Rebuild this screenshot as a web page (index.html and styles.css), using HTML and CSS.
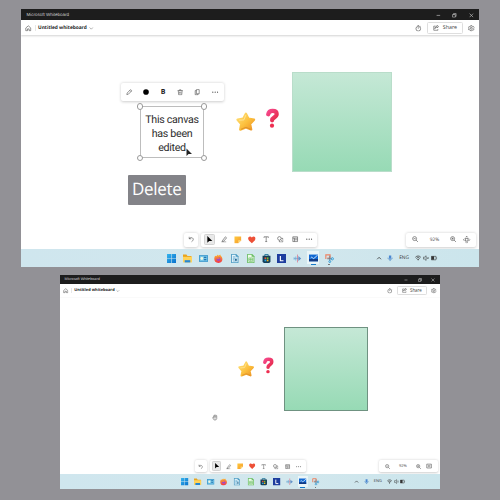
FILE: index.html
```html
<!DOCTYPE html>
<html lang="en">
<head>
<meta charset="utf-8">
<title>Whiteboard</title>
<link rel="stylesheet" href="styles.css">
</head>
<body>
<svg class="defs" width="0" height="0" aria-hidden="true">
  <defs>
    <linearGradient id="gold" x1="0" y1="0" x2="1" y2="1"><stop offset="0" stop-color="#ffe27a"/><stop offset=".55" stop-color="#fcbf3c"/><stop offset="1" stop-color="#ec9325"/></linearGradient>
    <linearGradient id="pink" x1="0" y1="0" x2="1" y2="1"><stop offset="0" stop-color="#f5488a"/><stop offset="1" stop-color="#e52a48"/></linearGradient>
    <linearGradient id="note" x1="0" y1="0" x2="1" y2="1"><stop offset="0" stop-color="#ffc93c"/><stop offset="1" stop-color="#f59a2e"/></linearGradient>
    <linearGradient id="win" x1="0" y1="0" x2="1" y2="1"><stop offset="0" stop-color="#35b4ee"/><stop offset="1" stop-color="#0870cc"/></linearGradient>
    <linearGradient id="fox" x1="0" y1="0" x2="0" y2="1"><stop offset="0" stop-color="#ffb52b"/><stop offset="1" stop-color="#f0344c"/></linearGradient>
  </defs>
  <symbol id="home" viewBox="0 0 16 16"><path d="M2 7.200 8 2l6 5.200V14H10V9.500H6V14H2Z" class="ln"/></symbol>
  <symbol id="down" viewBox="0 0 16 16"><path d="m2 5 6 6 6-6" class="ln"/></symbol>
  <symbol id="up" viewBox="0 0 16 16"><path d="m3 11 5-5 5 5" class="ln thick"/></symbol>
  <symbol id="min" viewBox="0 0 16 16"><path d="M2 8h12" class="ln thick"/></symbol>
  <symbol id="max" viewBox="0 0 16 16"><path d="M2 5h9v9H2ZM5 5V2h9v9h-3" class="ln thick"/></symbol>
  <symbol id="close" viewBox="0 0 16 16"><path d="m2 2 12 12M14 2 2 14" class="ln thick"/></symbol>
  <symbol id="timer" viewBox="0 0 16 16"><circle cx="8" cy="9" r="5.700" class="ln"/><path d="M8 5.500V9M6 1h4M13 3l1.200 1.200" class="ln"/></symbol>
  <symbol id="share" viewBox="0 0 16 16"><path d="M7 3H2v11h11v-3M5 10c.5-3 2.500-4.500 6-4.500V8l4-4-4-3v2.300C7.500 3.500 5.200 6 5 10Z" class="ln"/></symbol>
  <symbol id="gear" viewBox="0 0 16 16"><path d="m6.500 1.500 3 0 .6 2 1.600.8 2-.5 1.500 2.600L13.800 8l1.400 1.600-1.500 2.600-2-.5-1.600.8-.6 2h-3l-.6-2-1.600-.8-2 .5L.8 9.600 2.200 8 .8 6.400l1.500-2.600 2 .5 1.600-.8Z" class="ln"/><circle cx="8" cy="8" r="2.300" class="ln"/></symbol>
  <symbol id="pencil" viewBox="0 0 16 16"><path d="m2 14 1-4 8.500-8.500 3 3L6 13ZM9.500 3.500l3 3" class="ln"/></symbol>
  <symbol id="dot" viewBox="0 0 16 16"><circle cx="8" cy="8" r="7.500"/></symbol>
  <symbol id="trash" viewBox="0 0 16 16"><path d="M1.500 4h13M6 4V2h4v2M3.200 4l1 10.500h7.600l1-10.500M6.500 7v4.500M9.500 7v4.500" class="ln"/></symbol>
  <symbol id="copy" viewBox="0 0 16 16"><path d="M6 1.500h7v10.500H6ZM6 4H3v10.500h7V12" class="ln"/></symbol>
  <symbol id="more" viewBox="0 0 16 16"><circle cx="2" cy="8" r="1.500"/><circle cx="8" cy="8" r="1.500"/><circle cx="14" cy="8" r="1.500"/></symbol>
  <symbol id="undo" viewBox="0 0 16 16"><path d="M3 2v5h5M3 7c3-3.500 6-3.500 8.300-2 2.500 1.800 2.500 5 .5 6.800L8.500 15" class="ln"/></symbol>
  <symbol id="pointer" viewBox="0 0 16 16"><path d="M3 0v15l4-4h7Z"/></symbol>
  <symbol id="pen" viewBox="0 0 16 16"><path d="m4 11 7-9 3 2.500-7 8.500-4 .5ZM1 15h12" class="ln"/></symbol>
  <symbol id="sticky" viewBox="0 0 16 16"><path d="M1 1h14v8l-6 6H1Z" fill="url(#note)"/><path d="M15 9H9v6Z" fill="#ffdc82"/></symbol>
  <symbol id="heart" viewBox="0 0 16 16"><path d="M8 15C3 11 .3 8.500.3 5.300.3 1 5.500-.3 8 3.200 10.500-.3 15.700 1 15.700 5.300 15.700 8.500 13 11 8 15Z" fill="#ed5037"/></symbol>
  <symbol id="text" viewBox="0 0 16 16"><path d="M2.500 4.500V2h11v2.500M8 2v12M5.500 14h5" class="ln"/></symbol>
  <symbol id="shapes" viewBox="0 0 16 16"><circle cx="6" cy="6" r="4.500" class="ln"/><path d="M11 6h4v9H6v-4" class="ln"/><path d="m9 9 3 3" class="ln"/></symbol>
  <symbol id="layout" viewBox="0 0 16 16"><path d="M2 2h12v12H2ZM2 5.500h12M6 5.500V14M6 9.500h8" class="ln"/></symbol>
  <symbol id="zoomout" viewBox="0 0 16 16"><circle cx="6.500" cy="6.500" r="5" class="ln"/><path d="m10 10 5 5M4 6.500h5" class="ln"/></symbol>
  <symbol id="zoomin" viewBox="0 0 16 16"><circle cx="6.500" cy="6.500" r="5" class="ln"/><path d="m10 10 5 5M4 6.500h5M6.500 4v5" class="ln"/></symbol>
  <symbol id="move" viewBox="0 0 16 16"><path d="M5 5h6v6H5ZM6 2.500l2-2 2 2M6 13.500l2 2 2-2M2.500 6l-2 2 2 2M13.500 6l2 2-2 2" class="ln"/></symbol>
  <symbol id="fit" viewBox="0 0 16 16"><path d="M2 3h12v10H2ZM5 8h6M6.500 6.500 5 8l1.500 1.500M9.500 6.500 11 8l-1.500 1.500" class="ln"/></symbol>
  <symbol id="start" viewBox="0 0 16 16"><path d="M0 0h7.500v7.500H0ZM8.500 0H16v7.500H8.500ZM0 8.500h7.500V16H0ZM8.500 8.500H16V16H8.500Z" fill="url(#win)"/></symbol>
  <symbol id="folder" viewBox="0 0 16 16"><path d="M0 1h6l2 2.500h7V8H0Z" fill="#e9a41d"/><path d="M0 5h16v10H0Z" fill="#ffd35a"/><path d="M3 11h10v4H3Z" fill="#2587d3"/></symbol>
  <symbol id="panel" viewBox="0 0 16 16"><path d="M0 2h16v12H0Z" fill="#3e9bce"/><path d="M1.500 3.500h13v9h-13Z" fill="#74c4e8"/><circle cx="5" cy="8" r="2.500" fill="#f1f8e0"/><path d="M9 5h4v2H9ZM9 9h4v2H9Z" fill="#2474ac"/></symbol>
  <symbol id="firefox" viewBox="0 0 16 16"><path d="M2 3 4 4 7 1l1 2 3-2 1 2c4 3 5 12-4 13C0 16-1 8 2 3Z" fill="url(#fox)"/><circle cx="8" cy="9" r="3.600" fill="#a646c6"/><path d="M4 6c4-1 5 1 7 1-2 1-3 2-6 1Z" fill="#ff8a28"/></symbol>
  <symbol id="writer" viewBox="0 0 16 16"><path d="M2 0h9l4 4v12H2Z" fill="#4a9ac2"/><path d="M3.500 1.500H10V5h3.500v9.500h-10Z" fill="#e8f5fb"/><path d="M5 5h4M5 7.500h7M5 10h3M5 12.500h7" stroke="#278abc"/><path d="M9 9h3v3H9Z" fill="#1d5d86"/></symbol>
  <symbol id="calc" viewBox="0 0 16 16"><path d="M2 0h9l4 4v12H2Z" fill="#68bd62"/><path d="M3.500 1.500H10V5h3.500v9.500h-10Z" fill="#eefbea"/><path d="M5 7h7v6H5ZM5 10h7M8.500 7v6" fill="none" stroke="#52b34d"/></symbol>
  <symbol id="store" viewBox="0 0 16 16"><path d="M5 4V1h6v3" fill="none" stroke="#126b92" stroke-width="1.500"/><path d="M1 3h14v10q0 3-3 3H4q-3 0-3-3Z" fill="#123e59"/><path d="M4.500 6h3v3h-3Z" fill="#ef553b"/><path d="M8.500 6h3v3h-3Z" fill="#7bbd30"/><path d="M4.500 10h3v3h-3Z" fill="#28a9ec"/><path d="M8.500 10h3v3h-3Z" fill="#f9b91b"/></symbol>
  <symbol id="lapp" viewBox="0 0 16 16"><path d="M0 0h16v16H0Z" fill="#1d3d9e"/><path d="M6 3.500v8.500h5.500" fill="none" stroke="#fff" stroke-width="2"/></symbol>
  <symbol id="wave" viewBox="0 0 16 16"><path d="M2 6v4M5 4.500v7" stroke="#64aada" stroke-width="1.500"/><path d="M8 1v14" stroke="#dc7187" stroke-width="1.300"/><path d="m9.500 3.500 5 4.500-5 4.500Z" fill="#5a90c8"/><path d="M2 8h12" stroke="#7398c6"/></symbol>
  <symbol id="board" viewBox="0 0 16 16"><path d="M0 1h16v12H0Z" fill="#1269d3"/><path d="M0 9h16v4H0Z" fill="#123a83"/><path d="M3 7c3-4 4 4 7 0l5-5" fill="none" stroke="#fff" stroke-width="1.500"/></symbol>
  <symbol id="snip" viewBox="0 0 16 16"><path d="M1.500 9V1.500H9V7H4" fill="none" stroke="#ef8260" stroke-width="2"/><path d="M8.500 3v9M4 8.500h8" stroke="#66798a" stroke-width="1.500"/><circle cx="13" cy="8.500" r="2" fill="none" stroke="#2595d4" stroke-width="1.500"/><circle cx="8.500" cy="13.500" r="1.700" fill="none" stroke="#2595d4" stroke-width="1.500"/></symbol>
  <symbol id="mic" viewBox="0 0 16 16"><path d="M5 1h6v9H5Z" fill="#4a87d2"/><path d="M2.500 7c0 7 11 7 11 0M8 12v4" fill="none" stroke="#3478c2" stroke-width="1.500"/></symbol>
  <symbol id="wifi" viewBox="0 0 16 16"><path d="M1 6c4-4.500 10-4.500 14 0M3.500 9c3-3 6-3 9 0" class="ln thick"/><path d="m5.500 11.500 2.500 3 2.500-3q-2.500-2-5 0Z"/></symbol>
  <symbol id="sound" viewBox="0 0 16 16"><path d="M1 5.500h3L8 2v12L4 10.500H1ZM10.500 6l4 4M14.500 6l-4 4" class="ln"/></symbol>
  <symbol id="battery" viewBox="0 0 16 16"><path d="M1 3.500h12v9H1ZM15 6v4" class="ln"/><path d="M1 3.500h7v9H1Z"/></symbol>
  <symbol id="star" viewBox="0 0 20 20"><path d="M10 1.700 12.500 6.800 18.200 7.700 14.200 12 15.300 17.600 10 15.500 4.300 17.700 5.300 12 1.600 7.700 7.300 6.800Z" fill="url(#gold)" stroke="url(#gold)" stroke-width="2.400" stroke-linejoin="round"/><path d="m10 3-2 5-5 .3" fill="none" stroke="#ffeaa0" stroke-width=".8"/><path d="m5 17.500 5-2 5 2" fill="none" stroke="#d98929" stroke-width=".8"/></symbol>
  <symbol id="question" viewBox="0 0 13 20"><path d="M2.200 6.300C2.600 4 4.300 2.800 6.600 2.800c2.500 0 4.100 1.200 4.100 3.300 0 3.600-4.600 2.900-4.600 6.200" fill="none" stroke="url(#pink)" stroke-width="4.200" stroke-linecap="round"/><circle cx="6" cy="17.700" r="2.100" fill="#ee2e50"/></symbol>
  <symbol id="hand" viewBox="0 0 16 16"><path d="M4 8V4q1-2 2 0V2q1-1.500 2.200 0 1.200-1.300 2.300.5 1.800-1 2.300 1.200V11q-1 4-5 4-3 0-4.500-3L1.500 8.500Q2 6.500 4 8Z" fill="#ddd" stroke="#444"/><path d="M6 4v4M8.200 3v5M10.500 3v5" stroke="#555"/></symbol>
</svg>

<main class="page">
  <section class="window" data-last="move">
    <div class="canvas">
      <div class="tools edit-tools">
        <svg><use href="#pencil"/></svg><svg class="ink"><use href="#dot"/></svg><b>B</b><svg><use href="#trash"/></svg><svg><use href="#copy"/></svg><svg><use href="#more"/></svg>
      </div>
      <div class="textbox">
        <p>This canvas<br>has been<br>edited</p>
        <i class="handle tl"></i><i class="handle tr"></i><i class="handle bl"></i><i class="handle br"></i>
      </div>
      <svg class="cursor"><use href="#pointer"/></svg>
      <div class="tip">Delete</div>
      <svg class="star"><use href="#star"/></svg>
      <svg class="question"><use href="#question"/></svg>
      <div class="square"></div>
    </div>
  </section>
  <section class="window small" data-last="fit">
    <div class="canvas">
      <svg class="star"><use href="#star"/></svg>
      <svg class="question"><use href="#question"/></svg>
      <div class="square"></div>
      <svg class="hand"><use href="#hand"/></svg>
    </div>
  </section>
</main>

<template id="top">
  <div class="titlebar"><span>Microsoft Whiteboard</span><div class="controls"><svg><use href="#min"/></svg><svg><use href="#max"/></svg><svg><use href="#close"/></svg></div></div>
  <header class="header">
    <svg class="home"><use href="#home"/></svg><span class="rule"></span><h1>Untitled whiteboard</h1><svg class="chev"><use href="#down"/></svg>
    <span class="grow"></span>
    <svg class="timer"><use href="#timer"/></svg><button class="share"><svg><use href="#share"/></svg><span>Share</span></button><svg class="gear"><use href="#gear"/></svg>
  </header>
</template>
<template id="bottom">
  <div class="dock">
    <div class="tools undo"><svg><use href="#undo"/></svg></div>
    <div class="tools main-tools">
      <span class="active"><svg class="ink"><use href="#pointer"/></svg></span><span><svg><use href="#pen"/></svg></span><span><svg class="big"><use href="#sticky"/></svg></span><span><svg class="big"><use href="#heart"/></svg></span><span><svg><use href="#text"/></svg></span><span><svg><use href="#shapes"/></svg></span><span><svg><use href="#layout"/></svg></span><span><svg><use href="#more"/></svg></span>
    </div>
    <div class="tools zoom"><svg><use href="#zoomout"/></svg><span>92%</span><svg><use href="#zoomin"/></svg><svg class="last"><use/></svg></div>
  </div>
  <footer class="taskbar">
    <div class="apps"><span><svg><use href="#start"/></svg></span><span><svg><use href="#folder"/></svg></span><span><svg><use href="#panel"/></svg></span><span><svg><use href="#firefox"/></svg></span><span><svg><use href="#writer"/></svg></span><span><svg><use href="#calc"/></svg></span><span><svg><use href="#store"/></svg></span><span><svg><use href="#lapp"/></svg></span><span><svg><use href="#wave"/></svg></span><span class="open"><svg><use href="#board"/></svg></span><span class="running"><svg><use href="#snip"/></svg></span></div>
    <div class="tray"><span><svg><use href="#up"/></svg></span><span><svg><use href="#mic"/></svg></span><span class="lang">ENG</span><span><svg><use href="#wifi"/></svg></span><span><svg><use href="#sound"/></svg></span><span><svg><use href="#battery"/></svg></span></div>
  </footer>
</template>
<script src="app.js"></script>
</body>
</html>
```
FILE: styles.css
```css
* { box-sizing: border-box; margin: 0; padding: 0; }
html, body { width: 500px; height: 500px; overflow: hidden; }
body { background: #929196; font-family: "Open Sans", "Noto Sans", sans-serif; text-rendering: geometricPrecision; }
svg { flex: none; display: block; fill: currentColor; overflow: visible; }
.defs { position: absolute; }
.ln { fill: none; stroke: currentColor; stroke-width: 1.45; }
.thick { stroke-width: 2; }

.page { display: flex; flex-direction: column; align-items: center; gap: 8px; padding-top: 9px; }
.window {
  --u: 1px;
  width: calc(458 * var(--u)); height: calc(258 * var(--u));
  display: flex; flex-direction: column; flex: none;
  background: #fff; color: #484848; overflow: hidden;
}
.window.small { --u: .8297px; }

.titlebar {
  height: calc(11.4 * var(--u)); flex: none;
  display: flex; align-items: center; justify-content: space-between;
  padding: calc(1 * var(--u)) 0 0 calc(5.5 * var(--u));
  background: #1d1d1d; color: #d0d0d0;
  font: calc(4.5 * var(--u))/1 "Liberation Sans", sans-serif;
}
.controls { display: flex; gap: calc(11.8 * var(--u)); padding-right: calc(5.500 * var(--u)); }
.controls svg { width: calc(4.8 * var(--u)); height: calc(4.8 * var(--u)); }

.header {
  height: calc(15 * var(--u)); flex: none; position: relative;
  display: flex; align-items: center;
  padding: 0 calc(4 * var(--u));
  box-shadow: 0 calc(.5 * var(--u)) calc(2 * var(--u)) rgba(0, 0, 0, .18);
}
.home, .gear, .timer { width: calc(6.6 * var(--u)); height: calc(6.6 * var(--u)); }
.rule { width: 1px; height: calc(6 * var(--u)); background: #e7e7e7; margin: 0 calc(2.5 * var(--u)) 0 calc(3 * var(--u)); }
.header h1 { width: calc(48.5 * var(--u)); padding-top: 1.5px; font-size: calc(4.8 * var(--u)); line-height: 1; font-weight: 700; color: #222; white-space: nowrap; }
.chev { width: calc(4.6 * var(--u)); height: calc(4.6 * var(--u)); margin-left: calc(2.3 * var(--u)); }
.grow { flex: 1; }
.share {
  width: calc(36 * var(--u)); height: calc(11.3 * var(--u));
  margin: 0 calc(5.5 * var(--u)) 0 calc(5.5 * var(--u));
  display: flex; align-items: center; justify-content: center; gap: calc(4 * var(--u));
  background: #fff; border: 1px solid #dedede; border-radius: calc(1.5 * var(--u));
  font: calc(5.3 * var(--u))/1 "Open Sans", sans-serif; color: #444;
}
.share svg { width: calc(6 * var(--u)); height: calc(6 * var(--u)); }

.canvas { flex: 1; position: relative; }
.tools {
  display: flex; align-items: center; justify-content: space-around;
  background: #fff; border-radius: calc(2 * var(--u));
  box-shadow: 0 calc(.5 * var(--u)) calc(3 * var(--u)) rgba(0, 0, 0, .2);
}
.tools svg { width: calc(6.4 * var(--u)); height: calc(6.4 * var(--u)); }
.tools .ink { color: #000; }
.edit-tools { position: absolute; left: 99.500px; top: 48px; width: 103px; height: 17.5px; }
.edit-tools .ink { width: 6px; height: 6px; }
.edit-tools b { width: 6px; padding-top: 1px; text-align: center; font: 700 7px/1 "Open Sans", sans-serif; color: #222; }
.textbox { position: absolute; left: 119px; top: 71px; width: 64px; height: 51.500px; border: 1px solid #bdbdbd; }
.textbox p { padding-top: 5.500px; text-align: center; font: 10.700px/13.900px Roboto, "Liberation Sans", sans-serif; letter-spacing: -.3px; color: #2d2d2d; white-space: nowrap; }
.handle { position: absolute; width: 6.400px; height: 6.400px; background: #fff; border: 1px solid #999; border-radius: 50%; }
.tl { left: -4px; top: -4px; }
.tr { right: -4px; top: -4px; }
.bl { left: -4px; bottom: -4px; }
.br { right: -4px; bottom: -4px; }
.cursor { position: absolute; left: 164.300px; top: 112.500px; width: 8px; height: 9px; color: #222; }
.tip {
  position: absolute; left: 107px; top: 140px; width: 57.500px; height: 29.500px;
  border-radius: 1px; background: #838388; color: #fff;
  text-align: center; font: 400 17px/27.500px "Open Sans", "Noto Sans", sans-serif;
  letter-spacing: -.3px;
}
.star { position: absolute; left: calc(214.7 * var(--u)); top: calc(77 * var(--u)); width: calc(19.8 * var(--u)); height: calc(19.8 * var(--u)); }
.question { position: absolute; left: calc(244.5 * var(--u)); top: calc(73 * var(--u)); width: calc(13 * var(--u)); height: calc(20 * var(--u)); }
.square {
  position: absolute; left: 270.600px; top: 36.300px; width: 100.500px; height: 100.500px;
  background: linear-gradient(#c5e8d6, #97dab5); border: 1px solid #b9ddca;
}
.small .star { left: 178px; top: 64.500px; }
.small .question { left: 202.600px; top: 60.500px; }
.small .square { left: 224px; top: 30px; width: 84px; height: 84px; border-color: #6f9281; }
.hand { position: absolute; left: 151.500px; top: 117px; width: 6px; height: 7px; }

.dock { height: calc(14 * var(--u)); margin-bottom: calc(2.7 * var(--u)); flex: none; display: flex; padding: 0 calc(3 * var(--u)) 0 calc(163 * var(--u)); }
.undo { width: calc(14 * var(--u)); margin-right: calc(3.3 * var(--u)); }
.main-tools { width: calc(116 * var(--u)); display: grid; grid-template-columns: repeat(8, calc(14.2 * var(--u))); justify-content: start; padding-left: calc(1.3 * var(--u)); }
.main-tools span { height: calc(11.5 * var(--u)); display: flex; align-items: center; justify-content: center; }
.main-tools .active { margin: 0 calc(1.3 * var(--u)); background: #e9e9e9; border: 1px solid #d3d3d3; border-radius: calc(1.5 * var(--u)); }
.main-tools .active svg { width: calc(7.2 * var(--u)); height: calc(7.2 * var(--u)); }
.main-tools .big { width: calc(7.7 * var(--u)); height: calc(7.7 * var(--u)); }
.zoom { width: calc(70 * var(--u)); margin-left: auto; justify-content: flex-start; padding-left: calc(6.2 * var(--u)); }
.zoom span { width: calc(31.6 * var(--u)); padding-top: 1.5px; text-align: center; font-size: calc(4.8 * var(--u)); line-height: 1; }
.zoom .last { width: calc(7.4 * var(--u)); height: calc(7.4 * var(--u)); margin-left: calc(6 * var(--u)); }

.taskbar { height: calc(17.8 * var(--u)); flex: none; display: flex; align-items: center; background: linear-gradient(90deg, #cfe6ee, #d2e7ed 60%, #cbe5ec); }
.apps { display: flex; padding-left: calc(142.6 * var(--u)); }
.apps span { width: calc(15.77 * var(--u)); height: calc(17 * var(--u)); position: relative; display: flex; align-items: center; justify-content: center; }
.apps svg { width: calc(9 * var(--u)); height: calc(9 * var(--u)); }
.open { background: linear-gradient(#eaf5f8, #eaf5f8) center / 76% 78% no-repeat; }
.open::after, .running::after { content: ""; position: absolute; bottom: calc(1.2 * var(--u)); width: calc(5.5 * var(--u)); height: 1px; background: #1679c8; }
.running::after { width: calc(2 * var(--u)); background: #777; }
.tray { display: flex; margin-left: calc(36 * var(--u)); color: #333; font-size: calc(4.8 * var(--u)); line-height: 1; }
.tray span { display: flex; align-items: center; justify-content: center; width: calc(12 * var(--u)); }
.tray svg { width: calc(6.2 * var(--u)); height: calc(6.2 * var(--u)); }
.tray span:nth-child(2) { width: calc(11 * var(--u)); }
.tray .lang { width: calc(16 * var(--u)); padding-top: 1.5px; }
.tray span:nth-child(5) { width: calc(4.5 * var(--u)); }
```
FILE: app.js
```javascript
// Both windows share the same title bar, header, dock and taskbar.
document.querySelectorAll('.window').forEach(function (win) {
  win.prepend(document.getElementById('top').content.cloneNode(true));
  win.append(document.getElementById('bottom').content.cloneNode(true));
  win.querySelector('.zoom .last use').setAttribute('href', '#' + win.dataset.last);
});
```
